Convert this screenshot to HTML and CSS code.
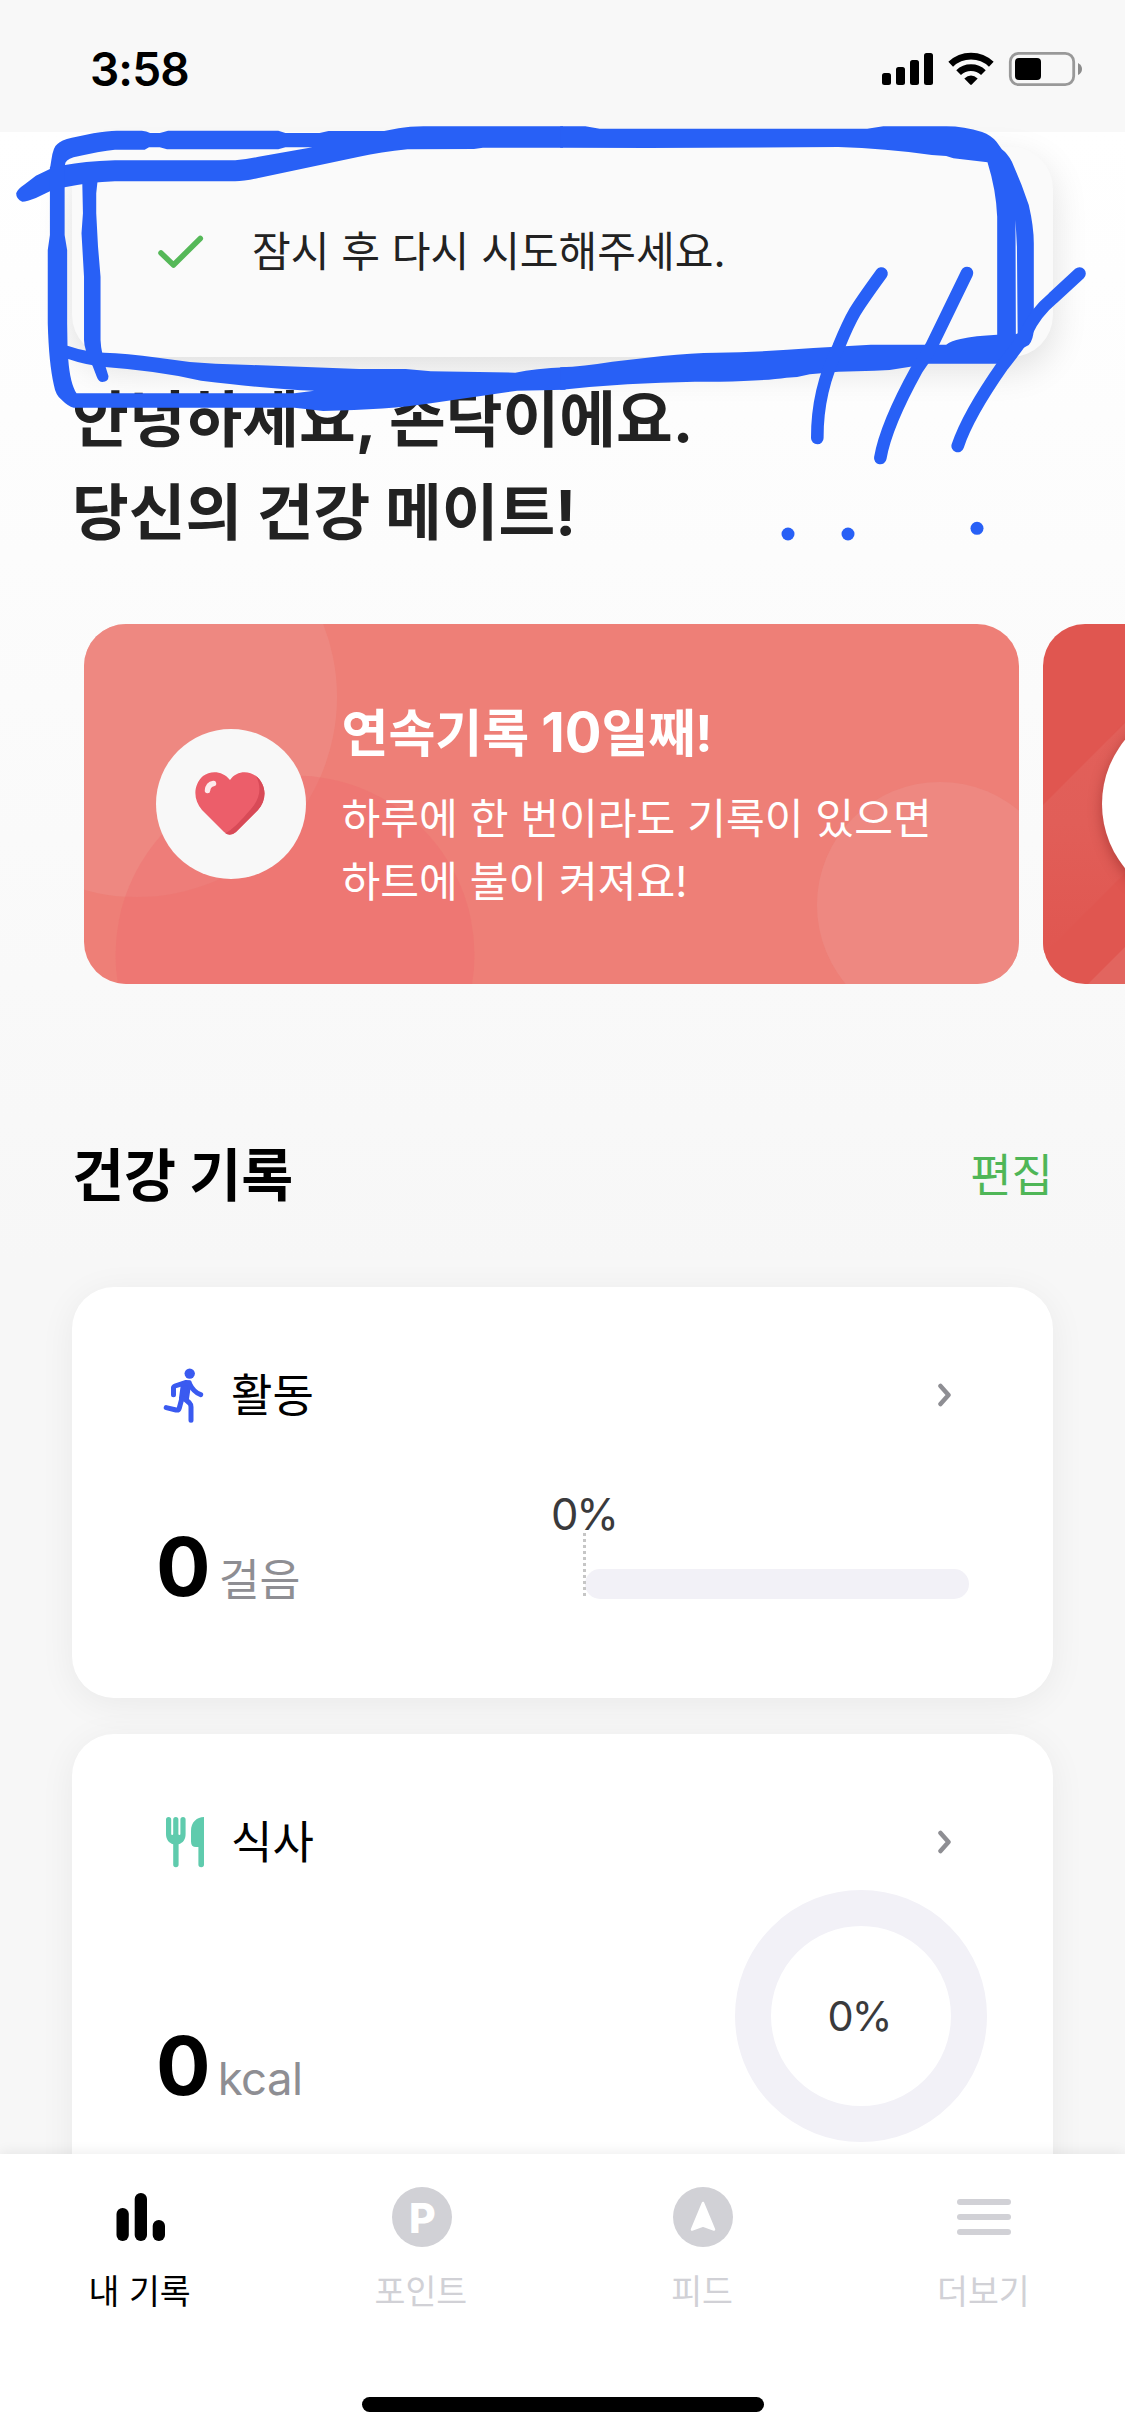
FILE: index.html
```
<!DOCTYPE html>
<html lang="ko">
<head>
<meta charset="utf-8">
<meta name="viewport" content="width=1125">
<title>건강 기록</title>
<link rel="stylesheet" href="styles.css">
</head>
<body>
<div class="phone">
  <header class="status">
    <span class="time">3:58</span>
    <svg class="status-icons" width="202" height="36" viewBox="881 51 202 36">
      <rect x="882" y="73" width="9" height="12" rx="2.5"/>
      <rect x="896" y="67" width="9" height="18" rx="2.5"/>
      <rect x="910" y="60" width="9" height="25" rx="2.5"/>
      <rect x="924" y="53" width="9" height="32" rx="2.5"/>
      <path d="M950.7 64.3A29.5 29.5 0 0 1 991.3 64.3M958.6 72.6A18 18 0 0 1 983.4 72.6" fill="none" stroke="#000" stroke-width="6.8"/>
      <path d="M964.3 78.6Q971 72.2 977.7 78.6L971.8 84.6Q971 85.3 970.2 84.6Z"/>
      <rect x="1010.3" y="53.3" width="63.4" height="31.4" rx="8.5" fill="none" stroke="#999" stroke-width="2.8"/>
      <rect x="1015" y="58" width="26" height="22" rx="4"/>
      <path d="M1078 63Q1082 65 1082 69T1078 75Z" fill="#8c8c8c"/>
    </svg>
  </header>

  <main class="content">
    <h1 class="greeting">안녕하세요, 손닥이에요.<br>당신의 건강 메이트!</h1>

    <section class="carousel">
      <article class="banner">
        <svg class="banner-art" viewBox="0 0 936 360">
          <circle cx="53" cy="73" r="200" fill="#ee918c" fill-opacity=".5"/>
          <circle cx="211" cy="331" r="179.500" fill="#ee6e6e" fill-opacity=".42"/>
          <circle cx="856" cy="281" r="123" fill="#ee918c" fill-opacity=".5"/>
        </svg>
        <div class="badge">
          <svg width="72" height="64" viewBox="0 0 72 64">
            <path d="M36 8C42-1 54-2 62 4C73 13 73 28 64 38L42 60Q36 65 30 60L8 38C-1 28-1 13 9 4C17-2 29-1 36 8Z" fill="#ec5e6a"/>
            <path d="M62 4C73 13 73 28 64 38L42 60Q36 65 31 61C37 60 50 45 57 37C66 27 68 15 62 4Z" fill="#d84a57"/>
            <path d="M13.500 18.500Q14 12.500 19.500 11.500" fill="none" stroke="#fff" stroke-opacity=".87" stroke-width="5.500" stroke-linecap="round"/>
          </svg>
        </div>
        <div class="banner-text">
          <h2>연속기록 <span class="latin">10</span>일째!</h2>
          <p>하루에 한 번이라도 기록이 있으면<br>하트에 불이 켜져요!</p>
        </div>
      </article>
      <article class="banner banner-next">
        <svg class="banner-art" viewBox="0 0 936 360">
          <defs>
            <linearGradient id="beam" x1="0" y1="0" x2="0" y2="1">
              <stop offset="0" stop-color="#e2625c"/>
              <stop offset=".6" stop-color="#e15e58"/>
              <stop offset="1" stop-color="#e05650"/>
            </linearGradient>
          </defs>
          <path d="M0 181L181 0H331L0 331Z" fill="url(#beam)"/>
          <path d="M45 360L405 0H700L340 360Z" fill="#e2655f"/>
        </svg>
        <div class="disc"></div>
      </article>
    </section>

    <div class="section-head">
      <h2>건강 기록</h2>
      <a class="edit">편집</a>
    </div>

    <section class="card card-activity">
      <div class="card-head">
        <svg class="card-icon" width="48" height="60" viewBox="0 0 48 60" fill="none" stroke="#3a5af0" stroke-linecap="round" stroke-linejoin="round">
          <circle cx="29.700" cy="8.600" r="5.200" fill="#3a5af0" stroke="none"/>
          <path d="M22.500 18.500L30 17L27.500 33.500L20.500 33Z" fill="#3a5af0" stroke-width="3"/>
          <path d="M13.500 29.700V23Q13.500 21.500 15 21L26 17.500L29 17.800C31 22 34 27.500 40.700 29.700M22 33L19.300 43Q18.600 45.500 16 45L6.200 42.600M25.500 34.500L29.500 38Q31 39.500 31 42V55.300" stroke-width="5"/>
        </svg>
        <span class="card-title">활동</span>
        <svg class="chevron" width="15" height="24" viewBox="0 0 15 24"><path d="M3.500 3L11.500 12L3.500 21"/></svg>
      </div>
      <div class="card-body">
        <p class="stat"><b>0</b><span>걸음</span></p>
        <div class="progress">
          <span class="progress-label">0%</span>
          <div class="track"><i class="marker"></i></div>
        </div>
      </div>
    </section>

    <section class="card card-meal">
      <div class="card-head">
        <svg class="card-icon" width="48" height="60" viewBox="0 0 48 60" fill="#5fcbad">
          <path d="M6 7.500a2.600 2.600 0 0 1 5.200 0V22q0 1 1 1t1-1V7.500a2.600 2.600 0 0 1 5.200 0V22q0 1 1 1t1-1V7.500a2.600 2.600 0 0 1 5.200 0V22C25.600 27.500 23 31 18.600 32.200V52.500a2.700 2.700 0 0 1-5.400 0V32.200C8.800 31 6 27.500 6 22Z"/>
          <path d="M44 5V52.500a2.800 2.800 0 0 1-5.600 0V35H36Q31 35 31 29.500V19C31 10 37 5 44 5Z"/>
        </svg>
        <span class="card-title">식사</span>
        <svg class="chevron" width="15" height="24" viewBox="0 0 15 24"><path d="M3.500 3L11.500 12L3.500 21"/></svg>
      </div>
      <div class="card-body">
        <p class="stat"><b>0</b><span class="latin-unit">kcal</span></p>
        <div class="ring">0%</div>
      </div>
    </section>
  </main>

  <nav class="tabs">
    <a class="tab active">
      <svg width="60" height="60" viewBox="0 0 60 60" fill="currentColor">
        <rect x="5.500" y="21" width="12.300" height="33" rx="6"/>
        <rect x="23.700" y="6" width="12.300" height="48" rx="6"/>
        <rect x="41.700" y="33" width="12.300" height="21" rx="6"/>
      </svg>
      <span>내 기록</span>
    </a>
    <a class="tab">
      <svg width="60" height="60" viewBox="0 0 60 60" fill="currentColor">
        <circle cx="30" cy="30" r="30"/>
        <text x="17" y="45.500" class="p-mark">P</text>
      </svg>
      <span>포인트</span>
    </a>
    <a class="tab">
      <svg width="60" height="60" viewBox="0 0 60 60" fill="currentColor">
        <circle cx="30" cy="30" r="30"/>
        <path d="M30 16L41 42.500L30 38.500L19 42.500Z" fill="#fff" stroke="#fff" stroke-width="2.500" stroke-linejoin="round"/>
      </svg>
      <span>피드</span>
    </a>
    <a class="tab">
      <svg width="60" height="60" viewBox="0 0 60 60" fill="currentColor">
        <rect x="3" y="12" width="54" height="6" rx="3"/>
        <rect x="3" y="27" width="54" height="6" rx="3"/>
        <rect x="3" y="42" width="54" height="6" rx="3"/>
      </svg>
      <span>더보기</span>
    </a>
    <i class="home-bar"></i>
  </nav>

  <div class="toast">
    <svg width="52" height="40" viewBox="0 0 52 40"><path d="M7 21L19.500 33L46.300 6.500"/></svg>
    <span>잠시 후 다시 시도해주세요.</span>
  </div>

  <!-- hand-drawn marker notes over the toast -->
  <svg class="ink" viewBox="0 0 1125 600">
    <g transform="scale(.35906 .33333)">
      <path fill-rule="evenodd" d="M139 507L143 480Q148 440 160 432Q170 420 200 413L260 400Q300 392 325 392H395Q408 393 418 399H445Q455 396 468 392H775L795 399H890L915 393H1070L1110 385Q1140 379 1180 379H1568V443H1345L1320 447L1135 448Q1060 456 1000 470L720 534Q680 544 655 544H320Q250 546 180 562L139 574L100 594Q75 605 62 605Q45 598 45 580Q48 568 70 552L100 527ZM181 495Q230 485 320 481H655Q690 478 720 470L870 442H795L775 448H465L445 442H415L403 449H320Q280 453 205 472Q180 481 181 495Z"/>
      <path d="M139 500H180V705L187 750V970L188 1037Q240 1056 290 1058Q350 1060 440 1073Q520 1087 600 1091L700 1095L1000 1107H1130L1200 1114L1435 1118Q1490 1106 1575 1102V1169L1440 1172L1200 1210Q1080 1230 900 1233L820 1223H205Q190 1220 170 1198Q155 1185 150 1155Q136 1090 133 970V750L139 705ZM190 1077Q195 1150 213 1180H820L875 1172Q760 1168 560 1142Q440 1113 300 1102Q240 1096 190 1077Z" fill-rule="evenodd"/>
      <path d="M229 540H272L268 580V640L273 740L280 830V1020Q281 1060 302 1128Q303 1146 285 1146Q275 1146 270 1132L258 1098Q234 1050 234 1020V830L227 700L231 640Z"/>
    </g>
    <g transform="translate(562 0) scale(.35906 .33333)">
      <path d="M-5 379H65L105 386H850L895 379H1070Q1120 379 1170 396Q1195 406 1210 425L1225 448Q1240 460 1253 485L1280 555L1300 615Q1314 680 1314 730V985Q1313 1020 1300 1035L1278 1048L1212 1091H1020L970 1100Q920 1111 870 1112L770 1115L690 1123L655 1131L625 1133Q560 1143 440 1145H370Q180 1148 0 1169H-5V1102Q60 1099 140 1085L280 1068Q360 1059 430 1058Q560 1056 700 1044L860 1034H1070Q1085 1022 1110 1017Q1150 1007 1212 1004V650Q1209 570 1185 487L1090 475L1070 468L1030 465Q900 445 770 441L240 444L0 443H-5ZM1263 660L1264 1003L1269 1000L1267 740Z" fill-rule="evenodd"/>
    </g>
    <g class="ink-lines">
      <path d="M881.500 273.500C855 310 852 314 838.500 347Q817 390 817.300 438"/>
      <path d="M967 273L932 345Q926 357 917 369Q886 425 880.300 458"/>
      <path d="M1079.500 273.500L1053 298Q1035 313 1026 333Q1022 341 1003 365Q968 415 957.700 446"/>
    </g>
    <circle cx="788" cy="534" r="6.500"/>
    <circle cx="848" cy="534" r="6.500"/>
    <circle cx="977" cy="528.300" r="6.500"/>
  </svg>
</div>
</body>
</html>
```
FILE: styles.css
```
* { box-sizing: border-box; margin: 0; padding: 0; }

body {
  width: 1125px;
  font-family: Inter, "Noto Sans CJK KR", sans-serif;
  color: #000;
  background: #f7f7f7;
}

svg { display: block; }

.phone {
  position: relative;
  display: flex;
  flex-direction: column;
  width: 1125px;
  height: 2436px;
  overflow: hidden;
}

/* status bar */
.status {
  flex: none;
  display: flex;
  justify-content: space-between;
  align-items: flex-start;
  height: 132px;
  padding: 51px 42px 0 90px;
  background: #f8f8f8;
}
.time {
  font-size: 46px;
  line-height: 36px;
  font-weight: 600;
  letter-spacing: -0.9px;
}

/* scrolling content */
.content {
  flex: 1;
  min-height: 0;
  padding-top: 241px;
  overflow: hidden;
  background: linear-gradient(#fff 0, #f7f7f7 1130px);
}
.greeting {
  margin-left: 72px;
  font-size: 61.700px;
  line-height: 93px;
  font-weight: 700;
  color: #222;
}

.carousel {
  display: flex;
  gap: 24px;
  margin-top: 65px;
  padding-left: 84px;
}
.banner {
  position: relative;
  flex: none;
  display: flex;
  align-items: center;
  width: 935px;
  height: 360px;
  padding-left: 72px;
  border-radius: 42px;
  overflow: hidden;
  background: #ee7f77;
  color: #fff;
}
.banner-art { position: absolute; inset: 0; width: 936px; height: 360px; }
.badge {
  position: relative;
  display: flex;
  align-items: center;
  justify-content: center;
  width: 150px;
  height: 150px;
  padding-right: 2px;
  border-radius: 50%;
  background: #f8f8f8;
}
.banner-text { position: relative; margin-left: 35.500px; }
.banner-text h2 {
  font-size: 51px;
  line-height: 76px;
  font-weight: 700;
}
.latin { font-size: 54.500px; line-height: 0; }
.banner-text p {
  margin-top: 15px;
  font-size: 42.150px;
  line-height: 63px;
}
.banner-next { padding-left: 59px; background: #e05650; }
.disc {
  position: relative;
  width: 202px;
  height: 202px;
  border-radius: 50%;
  background: #fff;
  box-shadow: 0 4px 14px rgba(90, 0, 0, .35);
}

.section-head {
  display: flex;
  justify-content: space-between;
  align-items: center;
  height: 80px;
  margin-top: 152px;
  padding: 0 72px;
}
.section-head h2 { font-size: 56.500px; line-height: 80px; font-weight: 700; }
.edit { font-size: 45px; line-height: 76px; color: #4fb657; }

/* record cards */
.card {
  width: 981px;
  height: 411px;
  margin: 71px 0 0 72px;
  padding: 78px 84px 0 88px;
  border-radius: 42px;
  background: #fff;
  box-shadow: 0 6px 36px rgba(0, 0, 0, .06);
}
.card-meal { height: 480px; margin-top: 36px; }
.card-head { display: flex; align-items: center; height: 60px; }
.card-title { margin: 2px 0 0 23px; font-size: 45px; line-height: 60px; }
.chevron { margin-left: auto; margin-right: 17px; }
.chevron path {
  fill: none;
  stroke: #8e8e93;
  stroke-width: 4.500;
  stroke-linecap: round;
  stroke-linejoin: round;
}
.card-body { display: flex; justify-content: space-between; }
.stat {
  display: flex;
  align-items: baseline;
  margin: 102px 0 0 -4px;
}
.stat b { font-size: 81px; line-height: 81px; font-weight: 700; }
.stat span { margin-left: 8px; font-size: 44.500px; line-height: 60px; color: #8e8e93; }
.stat .latin-unit { margin-left: 7px; font-size: 45.500px; letter-spacing: -0.5px; }
.card-meal .stat { margin-top: 154px; }

.progress {
  display: flex;
  flex-direction: column;
  width: 384px;
  margin-top: 65px;
}
.progress-label {
  align-self: flex-start;
  width: 68px;
  margin-left: -35px;
  font-size: 43.500px;
  line-height: 48px;
  letter-spacing: -2px;
  text-align: center;
  white-space: nowrap;
  color: #3a3a3c;
}
.track {
  position: relative;
  height: 30px;
  margin-top: 31px;
  border-radius: 15px;
  background: #f2f1f7;
}
.marker {
  position: absolute;
  left: -2px;
  top: -36px;
  width: 3px;
  height: 63px;
  background: repeating-linear-gradient(#c6c6c6 0 3px, transparent 3px 6px);
}
.ring {
  display: flex;
  align-items: center;
  justify-content: center;
  width: 252px;
  height: 252px;
  margin: 18px -18px 0 0;
  padding-right: 4px;
  border: 36px solid #f2f1f7;
  border-radius: 50%;
  font-size: 41.500px;
  letter-spacing: -2px;
  color: #3a3a3c;
}

/* tab bar */
.tabs {
  position: relative;
  flex: none;
  display: grid;
  grid-template-columns: repeat(4, 1fr);
  align-content: space-between;
  height: 282px;
  padding: 33px 0 24px;
  background: #fff;
  box-shadow: 0 0 14px rgba(0, 0, 0, .09);
}
.tab {
  display: flex;
  flex-direction: column;
  align-items: center;
  color: #d1d1d6;
}
.tab.active { color: #000; }
.tab span { margin: 21px 2px 0 0; font-size: 33.600px; line-height: 48px; }
.p-mark { font: 800 41px Inter, sans-serif; fill: #fff; }
.home-bar {
  grid-column: 1 / -1;
  justify-self: center;
  width: 402px;
  height: 15px;
  border-radius: 8px;
  background: #000;
}

/* toast floating over the page */
.toast {
  position: absolute;
  left: 72px;
  top: 147px;
  display: flex;
  align-items: center;
  width: 981px;
  height: 210px;
  padding-left: 82px;
  border-radius: 42px;
  background: #fafafa;
  box-shadow: 0 12px 36px rgba(0, 0, 0, .12);
  font-size: 42.100px;
  color: #222;
}
.toast svg path {
  fill: none;
  stroke: #55b858;
  stroke-width: 5.500;
  stroke-linecap: round;
  stroke-linejoin: round;
}
.toast span { margin-left: 46px; line-height: 60px; }

.ink {
  position: absolute;
  left: 0;
  top: 0;
  width: 1125px;
  height: 600px;
  fill: #2860f6;
  pointer-events: none;
}
.ink-lines {
  fill: none;
  stroke: #2860f6;
  stroke-width: 12.600;
  stroke-linecap: round;
}
```
